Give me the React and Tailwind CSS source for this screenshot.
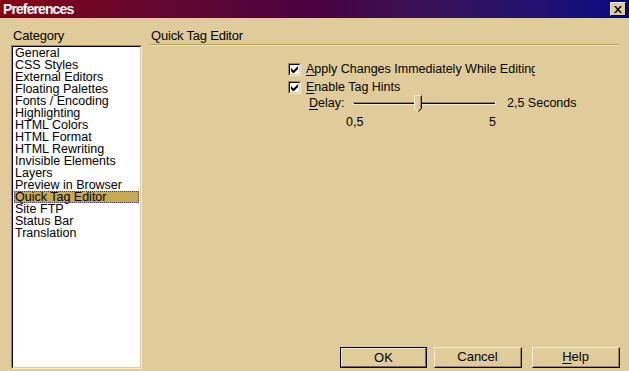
import React from "react";

const items = [
  "General",
  "CSS Styles",
  "External Editors",
  "Floating Palettes",
  "Fonts / Encoding",
  "Highlighting",
  "HTML Colors",
  "HTML Format",
  "HTML Rewriting",
  "Invisible Elements",
  "Layers",
  "Preview in Browser",
  "Quick Tag Editor",
  "Site FTP",
  "Status Bar",
  "Translation",
];

function Check() {
  return (
    <div className="w-[13px] h-[13px] border-t border-l border-[#a08850] border-b border-r border-b-[#f4ead0] border-r-[#f4ead0] shrink-0">
      <div className="w-full h-full border-t border-l border-black border-b border-r border-b-[#e0cc9a] border-r-[#e0cc9a] bg-white flex items-center justify-center">
        <svg width="7" height="7" viewBox="0 0 7 7">
          <path d="M0 2v3l2 2h1l4-4V0L2.5 4.5z" fill="#000" />
        </svg>
      </div>
    </div>
  );
}

function Button({ children, def, className = "" }) {
  return (
    <div
      className={
        "h-[21px] flex items-center justify-center text-[13px] text-black " +
        (def
          ? "border border-black "
          : "border-t border-l border-[#f4ead0] border-b border-r border-b-black border-r-black ") +
        className
      }
    >
      {def ? (
        <div className="w-full h-full border-t border-l border-[#f4ead0] border-b border-r border-b-[#806830] border-r-[#806830] flex items-center justify-center">
          {children}
        </div>
      ) : (
        <div className="w-full h-full border-b border-r border-[#a08850] flex items-center justify-center">
          {children}
        </div>
      )}
    </div>
  );
}

export default function App() {
  return (
    <div
      className="w-[629px] h-[371px] bg-[#e0cc9a] flex flex-col overflow-hidden text-black"
      style={{ fontFamily: '"Liberation Sans", Arial, sans-serif' }}
    >
      <div className="h-[18px] bg-gradient-to-r from-[#820010] via-[#4a0040] to-[#060684] flex items-center justify-between pl-[3px] pr-[3px] shrink-0">
        <span className="text-white font-bold text-[14px] tracking-[-0.9px] leading-none">Preferences</span>
        <div className="w-[16px] h-[14px] bg-[#e0cc9a] border-t border-l border-[#f4ead0] border-b border-r border-b-black border-r-black flex items-center justify-center">
          <svg width="8" height="7" viewBox="0 0 8 7">
            <path d="M0 0h2l2 2.5L6 0h2L5 3.5 8 7H6L4 4.5 2 7H0l3-3.5z" fill="#000" />
          </svg>
        </div>
      </div>
      <div className="flex-1 flex pl-[11px] min-h-0">
        <div className="w-[131px] flex flex-col">
          <div className="text-[13px] leading-[13px] pt-[11px] pl-[2px] h-[27px] tracking-[-0.2px]">Category</div>
          <div className="flex-1 mb-[2px] border-t border-l border-[#a08850] border-b border-r border-b-[#f4ead0] border-r-[#f4ead0]">
            <div className="w-full h-full bg-white border-t border-l border-black border-b border-r border-b-[#e0cc9a] border-r-[#e0cc9a] pl-[1px] pr-[1px]">
              {items.map((it) =>
                it === "Quick Tag Editor" ? (
                  <div
                    key={it}
                    className="h-[12px] leading-[12px] text-[12.5px] pl-[1px] bg-[#c8a850] outline-1 outline-dotted outline-[#404060] -outline-offset-1 whitespace-nowrap"
                  >
                    {it}
                  </div>
                ) : (
                  <div key={it} className="h-[12px] leading-[12px] text-[12.5px] pl-[1px] whitespace-nowrap">
                    {it}
                  </div>
                )
              )}
            </div>
          </div>
        </div>
        <div className="flex-1 ml-[8px] mr-[10px] flex flex-col">
          <div className="text-[13px] leading-[13px] pt-[11px] pl-[1px] h-[26px] tracking-[-0.2px]">Quick Tag Editor</div>
          <div className="h-[2px] border-t border-[#b89c50] border-b border-b-[#f0e2b8]" />
          <div className="pl-[138px] pt-[17px] flex flex-col">
            <div className="flex items-center h-[13px] gap-[5px]">
              <Check />
              <span className="text-[12.5px] leading-[13px] whitespace-nowrap overflow-hidden w-[229px]">
                <span className="underline underline-offset-2">A</span>pply Changes Immediately While Editing
              </span>
            </div>
            <div className="flex items-center h-[13px] gap-[5px] mt-[5px]">
              <Check />
              <span className="text-[12.5px] leading-[13px] whitespace-nowrap">
                <span className="underline underline-offset-2">E</span>nable Tag Hints
              </span>
            </div>
            <div className="flex items-center h-[17px] mt-[1px] pl-[21px]">
              <span className="text-[12.5px] leading-[13px] w-[44px] whitespace-nowrap">
                <span className="underline underline-offset-2">D</span>elay:
              </span>
              <svg width="144" height="17" viewBox="0 0 144 17" className="shrink-0">
                <rect x="0" y="7" width="143" height="1" fill="#a08850" />
                <rect x="1" y="8" width="141" height="1" fill="#000" />
                <rect x="0" y="9" width="143" height="1" fill="#f4ead0" />
                <rect x="142" y="7" width="1" height="3" fill="#f4ead0" />
                <path d="M61 0h8v13l-4 4-4-4z" fill="#e0cc9a" />
                <path d="M61 0h8M61 0v13l4 4" stroke="#f4ead0" strokeWidth="1" fill="none" transform="translate(0.5 0.5)" />
                <path d="M68 0v13l-3 3" stroke="#000" strokeWidth="1" fill="none" transform="translate(0.5 0.5)" />
                <path d="M67 1v12l-2 2" stroke="#a08850" strokeWidth="1" fill="none" transform="translate(0.5 0.5)" />
              </svg>
              <span className="text-[12.5px] leading-[13px] ml-[10px] whitespace-nowrap">2,5 Seconds</span>
            </div>
            <div className="flex h-[13px] mt-[4px] text-[12.5px] leading-[13px] pl-[58px]">
              <span className="w-[143px]">0,5</span>
              <span>5</span>
            </div>
          </div>
          <div className="mt-auto mb-[3px] flex justify-end -mr-[1px]">
            <Button def className="w-[87px]">OK</Button>
            <Button className="w-[88px] ml-[7px]">Cancel</Button>
            <Button className="w-[88px] ml-[10px]">
              <span>
                <span className="underline underline-offset-2">H</span>elp
              </span>
            </Button>
          </div>
        </div>
      </div>
    </div>
  );
}
